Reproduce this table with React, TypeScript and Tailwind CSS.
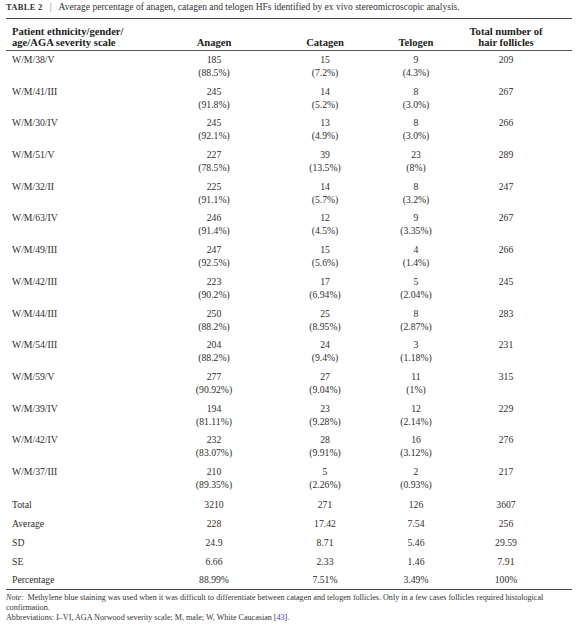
const rows = [
  ['W/M/38/V', '185', '88.5%', '15', '7.2%', '9', '4.3%', '209'],
  ['W/M/41/III', '245', '91.8%', '14', '5.2%', '8', '3.0%', '267'],
  ['W/M/30/IV', '245', '92.1%', '13', '4.9%', '8', '3.0%', '266'],
  ['W/M/51/V', '227', '78.5%', '39', '13.5%', '23', '8%', '289'],
  ['W/M/32/II', '225', '91.1%', '14', '5.7%', '8', '3.2%', '247'],
  ['W/M/63/IV', '246', '91.4%', '12', '4.5%', '9', '3.35%', '267'],
  ['W/M/49/III', '247', '92.5%', '15', '5.6%', '4', '1.4%', '266'],
  ['W/M/42/III', '223', '90.2%', '17', '6.94%', '5', '2.04%', '245'],
  ['W/M/44/III', '250', '88.2%', '25', '8.95%', '8', '2.87%', '283'],
  ['W/M/54/III', '204', '88.2%', '24', '9.4%', '3', '1.18%', '231'],
  ['W/M/59/V', '277', '90.92%', '27', '9.04%', '11', '1%', '315'],
  ['W/M/39/IV', '194', '81.11%', '23', '9.28%', '12', '2.14%', '229'],
  ['W/M/42/IV', '232', '83.07%', '28', '9.91%', '16', '3.12%', '276'],
  ['W/M/37/III', '210', '89.35%', '5', '2.26%', '2', '0.93%', '217'],
];

const summary = [
  ['Total', '3210', '271', '126', '3607'],
  ['Average', '228', '17.42', '7.54', '256'],
  ['SD', '24.9', '8.71', '5.46', '29.59'],
  ['SE', '6.66', '2.33', '1.46', '7.91'],
  ['Percentage', '88.99%', '7.51%', '3.49%', '100%'],
];

const grid = 'grid grid-cols-[148px_120px_102px_80px_100px]';

export default function App() {
  return (
    <div className="w-[580px] h-[630px] overflow-hidden bg-white text-[#2e2e2e] font-['Liberation_Serif',serif]">
      {/* Caption */}
      <div className="pl-[6px] pt-[2px] h-[18px] text-[9.5px] leading-[10px] text-[#333] whitespace-nowrap">
        <span className="font-bold tracking-[0.3px] text-[8.5px]">TABLE 2</span>
        <span className="mx-[7px] text-[#777]">|</span>
        <span>Average percentage of anagen, catagen and telogen HFs identified by ex vivo stereomicroscopic analysis.</span>
      </div>

      <div className="ml-[6px] w-[566px] border-t-[1.5px] border-[#444]">
        {/* Header */}
        <div className={`${grid} h-[32px] pt-[8px] items-end pb-[4px] text-[10.6px] leading-[10.5px] font-bold text-[#222] border-b-[1.5px] border-[#555]`}>
          <div className="pl-[6px] whitespace-nowrap">
            Patient ethnicity/gender/
            <br />
            age/AGA severity scale
          </div>
          <div className="text-center">Anagen</div>
          <div className="text-center">Catagen</div>
          <div className="text-center">Telogen</div>
          <div className="text-center">
            Total number of
            <br />
            hair follicles
          </div>
        </div>

        {/* Patients */}
        {rows.map((r) => (
          <div key={r[0]} className={`${grid} h-[31.7px] pt-[2px] text-[9.7px] leading-[13px]`}>
            <div className="pl-[6px]">{r[0]}</div>
            <div className="text-center">
              <div>{r[1]}</div>
              <div>({r[2]})</div>
            </div>
            <div className="text-center">
              <div>{r[3]}</div>
              <div>({r[4]})</div>
            </div>
            <div className="text-center">
              <div>{r[5]}</div>
              <div>({r[6]})</div>
            </div>
            <div className="text-center">{r[7]}</div>
          </div>
        ))}

        {/* Summary */}
        <div className="border-b-[1.5px] border-[#444]">
          {summary.map((s) => (
            <div key={s[0]} className={`${grid} h-[18.8px] pt-[3.5px] text-[9.7px] leading-[13px]`}>
              <div className="pl-[6px]">{s[0]}</div>
              <div className="text-center">{s[1]}</div>
              <div className="text-center">{s[2]}</div>
              <div className="text-center">{s[3]}</div>
              <div className="text-center">{s[4]}</div>
            </div>
          ))}
        </div>

        {/* Footnotes */}
        <div className="pt-[3px] w-[562px] text-[8.1px] leading-[10px] text-[#333]">
          <p>
            <em className="pr-[1.5px]">Note:</em> Methylene blue staining was used when it was difficult to differentiate between catagen and telogen follicles. Only in a few cases follicles required histological confirmation.
          </p>
          <p>
            Abbreviations: I–VI, AGA Norwood severity scale; M, male; W, White Caucasian [<span className="text-[#3b3bd6]">43</span>].
          </p>
        </div>
      </div>
    </div>
  );
}
